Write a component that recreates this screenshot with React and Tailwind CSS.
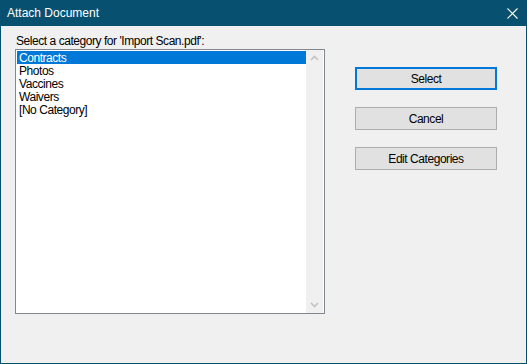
import React from 'react';

const categories = ['Contracts', 'Photos', 'Vaccines', 'Waivers', '[No Category]'];

const font = { fontFamily: '"Liberation Sans", Arial, sans-serif' };

const Chevron = ({ down }) => (
  <svg width="9" height="6" viewBox="0 0 9 6" className="block">
    <path
      d={down ? 'M1 1 L4.5 4.5 L8 1' : 'M1 5 L4.5 1.5 L8 5'}
      fill="none"
      stroke="#c2c2c2"
      strokeWidth="1.6"
    />
  </svg>
);

const DialogButton = ({ children, primary }) => (
  <button
    className={
      primary
        ? 'w-[142px] h-[23px] bg-[#e1e1e1] border-2 border-[#0078d7] text-[12px] tracking-[-0.45px] text-black'
        : 'w-[142px] h-[23px] bg-[#e1e1e1] border border-[#adadad] text-[12px] tracking-[-0.45px] text-black'
    }
  >
    {children}
  </button>
);

export default function App() {
  return (
    <div
      className="w-[527px] h-[364px] flex flex-col bg-[#f0f0f0] border border-t-0 border-[#07506f]"
      style={font}
    >
      <div className="h-[26px] -mx-px bg-[#07506f] flex items-center justify-between pl-[7px] pr-[9px] text-white text-[12px]">
        <span>Attach Document</span>
        <svg width="11" height="11" viewBox="0 0 11 11">
          <path d="M0.5 0.5 L10.5 10.5 M10.5 0.5 L0.5 10.5" stroke="#fff" strokeWidth="1.1" />
        </svg>
      </div>
      <div className="flex pl-[14px] pt-[6px] tracking-[-0.45px]">
        <div className="flex flex-col">
          <div className="text-[12px] leading-[18px] text-black h-[17px] pl-px">
            Select a category for 'Import Scan.pdf':
          </div>
          <div className="w-[310px] h-[265px] border border-[#828790] bg-white flex">
            <div className="flex-1 pt-px pl-px">
              {categories.map((c, i) => (
                <div
                  key={c}
                  className={
                    i === 0
                      ? 'h-[13px] leading-[11px] pt-[2px] text-[12px] pl-[2px] bg-[#0078d7] text-white'
                      : 'h-[13px] leading-[11px] pt-[2px] text-[12px] pl-[2px] text-black'
                  }
                >
                  {c}
                </div>
              ))}
            </div>
            <div className="w-[17px] bg-[#f0f0f0] flex flex-col justify-between items-center py-[5px] mr-px">
              <Chevron />
              <Chevron down />
            </div>
          </div>
        </div>
        <div className="flex flex-col gap-[17px] ml-[30px] pt-[35px]">
          <DialogButton primary>Select</DialogButton>
          <DialogButton>Cancel</DialogButton>
          <DialogButton>Edit Categories</DialogButton>
        </div>
      </div>
    </div>
  );
}
